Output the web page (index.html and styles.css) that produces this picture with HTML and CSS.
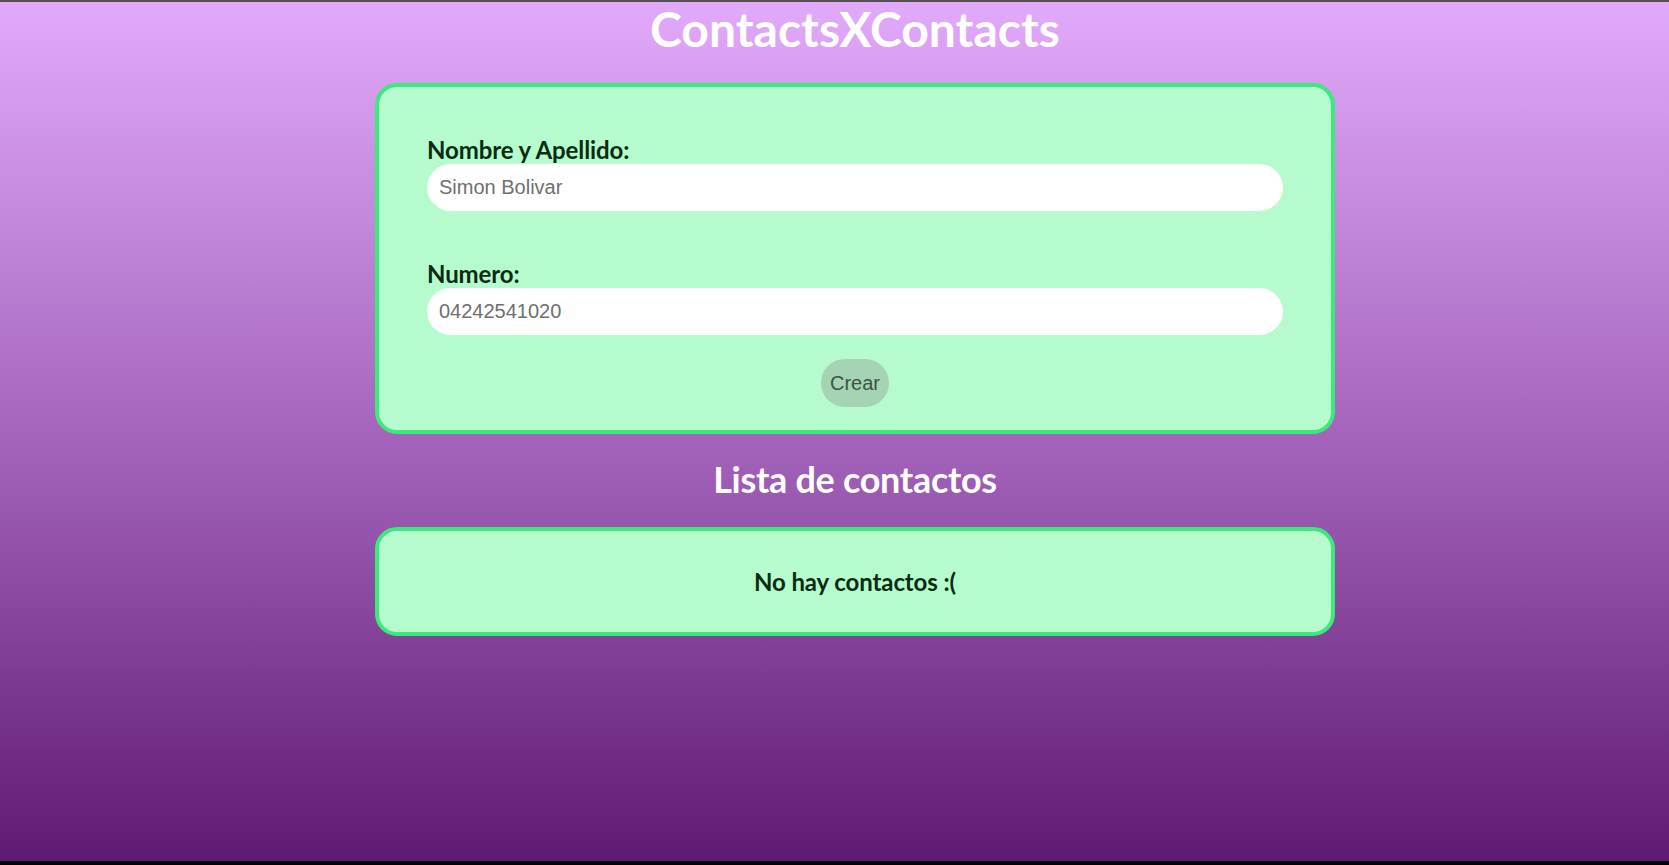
FILE: index.html
```html
<!DOCTYPE html>
<html lang="es">
<head>
<meta charset="utf-8">
<title>ContactsXContacts</title>
<link rel="stylesheet" href="styles.css">
</head>
<body>
<div class="page">
  <h1 class="title">ContactsXContacts</h1>
  <form class="card form-card">
    <label class="field-label" for="nombre">Nombre y Apellido:</label>
    <input class="field-input" id="nombre" type="text" placeholder="Simon Bolivar">
    <label class="field-label second" for="numero">Numero:</label>
    <input class="field-input" id="numero" type="text" placeholder="04242541020">
    <div class="actions"><button class="btn" type="button">Crear</button></div>
  </form>
  <h2 class="subtitle">Lista de contactos</h2>
  <div class="card list-card">
    <p class="empty">No hay contactos :(</p>
  </div>
</div>
</body>
</html>
```
FILE: styles.css
```css
html {
  background: #000;
  margin: 0;
  padding: 0;
}
body {
  margin: 0;
  font-family: Lato, "Noto Sans", sans-serif;
}
.page {
  border-top: 2px solid #555055;
  height: 861px;
  box-sizing: border-box;
  padding-left: 41px;
  background: linear-gradient(to bottom, #e2aafb 0%, #9f5eb6 55%, #5f1a73 100%);
  display: flex;
  flex-direction: column;
  align-items: center;
}
.title {
  margin: 0;
  color: #fff;
  font-size: 48px;
  font-weight: 700;
  line-height: 53px;
  text-align: center;
}
.card {
  width: 960px;
  box-sizing: border-box;
  background: #b5fbce;
  border: 4px solid #3de87c;
  border-radius: 22px;
}
.form-card {
  margin-top: 28px;
  padding: 48px 48px 23px;
  display: flex;
  flex-direction: column;
}
.field-label {
  color: #0b2b12;
  font-size: 24px;
  font-weight: 700;
  line-height: 29px;
  letter-spacing: -0.1px;
}
.field-label.second {
  margin-top: 48px;
}
.field-input {
  height: 47px;
  box-sizing: border-box;
  border: none;
  border-radius: 24px;
  background: #fff;
  padding: 0 12px;
  font-family: "Liberation Sans", Arial, sans-serif;
  font-size: 20px;
  color: #333;
  outline: none;
}
.field-input::placeholder {
  color: #6f6f6f;
}
.actions {
  display: flex;
  justify-content: center;
  margin-top: 24px;
}
.btn {
  width: 68px;
  height: 48px;
  border: none;
  border-radius: 24px;
  background: #a5d4b4;
  color: #3d5242;
  font-family: "Liberation Sans", Arial, sans-serif;
  font-size: 20px;
  padding: 0;
}
.subtitle {
  margin: 24px 0 26px;
  color: #fff;
  font-size: 36px;
  font-weight: 700;
  line-height: 43px;
  letter-spacing: -0.3px;
}
.list-card {
  padding: 36px 0 36px;
  text-align: center;
}
.empty {
  margin: 0;
  color: #0b2b12;
  font-size: 24px;
  font-weight: 700;
  line-height: 29px;
  letter-spacing: -0.1px;
}
```
